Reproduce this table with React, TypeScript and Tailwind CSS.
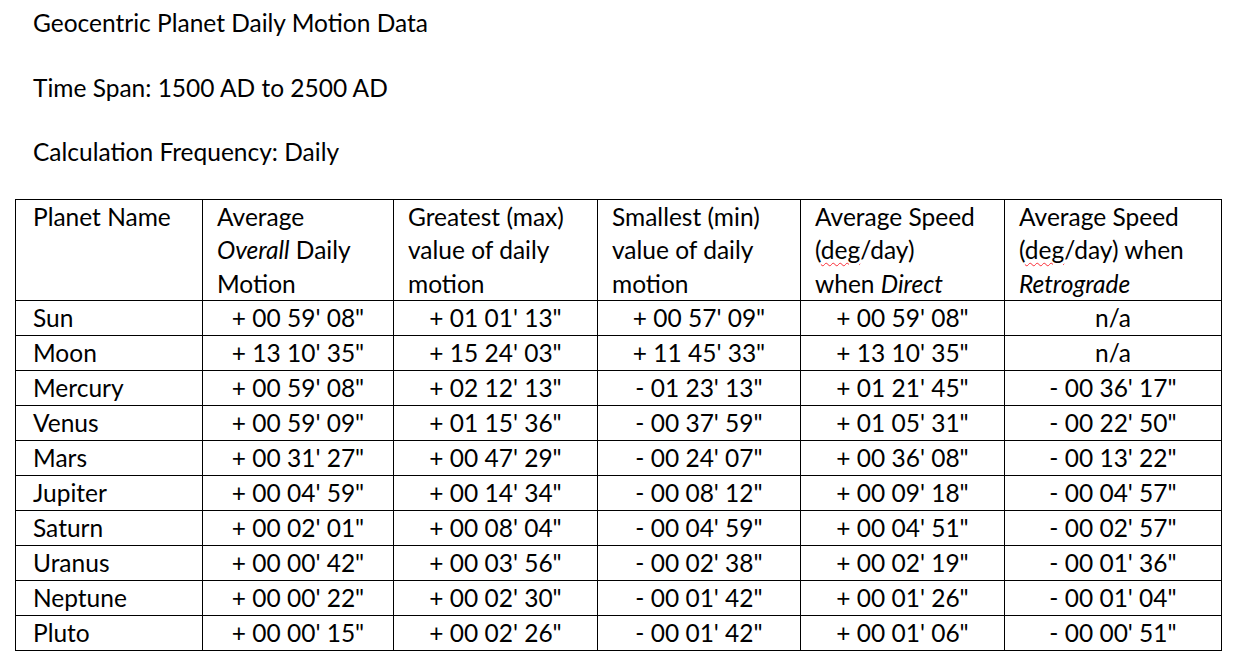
import React from "react";

type Row = {
  name: string;
  overall: string;
  max: string;
  min: string;
  direct: string;
  retro: string;
};

const rows: Row[] = [
  { name: "Sun", overall: `+ 00 59' 08"`, max: `+ 01 01' 13"`, min: `+ 00 57' 09"`, direct: `+ 00 59' 08"`, retro: "n/a" },
  { name: "Moon", overall: `+ 13 10' 35"`, max: `+ 15 24' 03"`, min: `+ 11 45' 33"`, direct: `+ 13 10' 35"`, retro: "n/a" },
  { name: "Mercury", overall: `+ 00 59' 08"`, max: `+ 02 12' 13"`, min: `- 01 23' 13"`, direct: `+ 01 21' 45"`, retro: `- 00 36' 17"` },
  { name: "Venus", overall: `+ 00 59' 09"`, max: `+ 01 15' 36"`, min: `- 00 37' 59"`, direct: `+ 01 05' 31"`, retro: `- 00 22' 50"` },
  { name: "Mars", overall: `+ 00 31' 27"`, max: `+ 00 47' 29"`, min: `- 00 24' 07"`, direct: `+ 00 36' 08"`, retro: `- 00 13' 22"` },
  { name: "Jupiter", overall: `+ 00 04' 59"`, max: `+ 00 14' 34"`, min: `- 00 08' 12"`, direct: `+ 00 09' 18"`, retro: `- 00 04' 57"` },
  { name: "Saturn", overall: `+ 00 02' 01"`, max: `+ 00 08' 04"`, min: `- 00 04' 59"`, direct: `+ 00 04' 51"`, retro: `- 00 02' 57"` },
  { name: "Uranus", overall: `+ 00 00' 42"`, max: `+ 00 03' 56"`, min: `- 00 02' 38"`, direct: `+ 00 02' 19"`, retro: `- 00 01' 36"` },
  { name: "Neptune", overall: `+ 00 00' 22"`, max: `+ 00 02' 30"`, min: `- 00 01' 42"`, direct: `+ 00 01' 26"`, retro: `- 00 01' 04"` },
  { name: "Pluto", overall: `+ 00 00' 15"`, max: `+ 00 02' 26"`, min: `- 00 01' 42"`, direct: `+ 00 01' 06"`, retro: `- 00 00' 51"` },
];

// spell-check squiggle on "deg"
const Deg = () => (
  <span className="underline decoration-wavy decoration-red-500 decoration-[1px] underline-offset-[3px]">deg</span>
);

export default function App() {
  return (
    <div className="min-h-screen bg-white text-black font-['Lato','Noto_Sans',sans-serif] text-[24.5px] leading-[33.5px]">
      {/* Document header lines */}
      <div className="pl-[33px] pt-[6px] flex flex-col gap-[31px]">
        <p>Geocentric Planet Daily Motion Data</p>
        <p>Time Span: 1500 AD to 2500 AD</p>
        <p>Calculation Frequency: Daily</p>
      </div>

      <table className="ml-[15px] mt-[30px] w-[1206px] table-fixed border-collapse border border-black">
        <colgroup>
          <col className="w-[187px]" />
          <col className="w-[191px]" />
          <col className="w-[204px]" />
          <col className="w-[203px]" />
          <col className="w-[204px]" />
          <col className="w-[217px]" />
        </colgroup>
        <thead>
          <tr className="align-top text-left whitespace-nowrap">
            <th className="border border-black font-normal pl-[17px]">Planet Name</th>
            <th className="border border-black font-normal pl-[14px]">
              Average
              <br />
              <i>Overall</i> Daily
              <br />
              Motion
            </th>
            <th className="border border-black font-normal pl-[14px]">
              Greatest (max)
              <br />
              value of daily
              <br />
              motion
            </th>
            <th className="border border-black font-normal pl-[14px]">
              Smallest (min)
              <br />
              value of daily
              <br />
              motion
            </th>
            <th className="border border-black font-normal pl-[14px]">
              Average Speed
              <br />
              (<Deg />/day)
              <br />
              when <i>Direct</i>
            </th>
            <th className="border border-black font-normal pl-[14px]">
              Average Speed
              <br />
              (<Deg />/day) when
              <br />
              <i>Retrograde</i>
            </th>
          </tr>
        </thead>
        <tbody>
          {rows.map((r) => (
            <tr key={r.name} className="h-[35px]">
              <td className="border border-black pl-[17px]">{r.name}</td>
              <td className="border border-black text-center">{r.overall}</td>
              <td className="border border-black text-center">{r.max}</td>
              <td className="border border-black text-center">{r.min}</td>
              <td className="border border-black text-center">{r.direct}</td>
              <td className="border border-black text-center">{r.retro}</td>
            </tr>
          ))}
        </tbody>
      </table>
    </div>
  );
}
